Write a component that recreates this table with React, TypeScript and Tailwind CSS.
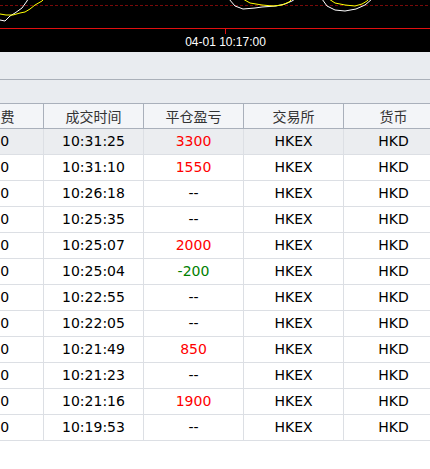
import React from "react";

type Row = { t: string; pnl: string; c: "red" | "green" | "none"; hl?: boolean };

const rows: Row[] = [
  { t: "10:31:25", pnl: "3300", c: "red", hl: true },
  { t: "10:31:10", pnl: "1550", c: "red" },
  { t: "10:26:18", pnl: "--", c: "none" },
  { t: "10:25:35", pnl: "--", c: "none" },
  { t: "10:25:07", pnl: "2000", c: "red" },
  { t: "10:25:04", pnl: "-200", c: "green" },
  { t: "10:22:55", pnl: "--", c: "none" },
  { t: "10:22:05", pnl: "--", c: "none" },
  { t: "10:21:49", pnl: "850", c: "red" },
  { t: "10:21:23", pnl: "--", c: "none" },
  { t: "10:21:16", pnl: "1900", c: "red" },
  { t: "10:19:53", pnl: "--", c: "none" },
];

const font = { fontFamily: '"DejaVu Sans", "Noto Sans CJK SC", sans-serif' };

function Chart() {
  return (
    <div className="h-[52px] bg-black flex flex-col">
      <svg width="430" height="34" viewBox="0 0 430 34" className="block">
        <line x1="0" y1="5.5" x2="430" y2="5.5" stroke="#7a0a0a" strokeWidth="1" strokeDasharray="3 2" />
        <polyline
          fill="none"
          stroke="#ffffff"
          strokeWidth="1"
          points="0,20 5,21 10,16 15,13 22,8 27,1 28,-1"
        />
        <polyline
          fill="none"
          stroke="#ffff00"
          strokeWidth="1"
          points="0,14 6,15 13,15 20,13 25,12 30,9 35,5 42,1 44,-1"
        />
        <polyline
          fill="none"
          stroke="#ffffff"
          strokeWidth="1"
          points="229,-1 235,6 243,9 255,8 262,7 276,6 285,4 292,1 295,-1"
        />
        <polyline
          fill="none"
          stroke="#ffff00"
          strokeWidth="1"
          points="243,-1 250,3 262,5 273,6 282,5 289,2 292,-1"
        />
        <polyline
          fill="none"
          stroke="#ffffff"
          strokeWidth="1"
          points="322,-1 327,6 335,10 345,11 356,9 365,5 372,-1"
        />
        <polyline
          fill="none"
          stroke="#ffff00"
          strokeWidth="1"
          points="329,-1 335,3 345,5 355,6 362,4 367,1 369,-1"
        />
        <line x1="0" y1="28.5" x2="430" y2="28.5" stroke="#e01010" strokeWidth="1.2" />
        <line x1="225.5" y1="28" x2="225.5" y2="34" stroke="#e01010" strokeWidth="1" />
      </svg>
      <div
        className="flex-1 flex items-start justify-center pl-[21px] text-white text-[12px] leading-[15px] pt-[1px]"
        style={{ fontFamily: '"Liberation Sans", Arial, sans-serif' }}
      >
        04-01 10:17:00
      </div>
    </div>
  );
}

function Cell({ children, className = "" }: { children: React.ReactNode; className?: string }) {
  return (
    <div className={`w-[100px] shrink-0 flex items-center justify-center whitespace-nowrap ${className}`}>
      {children}
    </div>
  );
}

export default function App() {
  return (
    <div className="w-[430px] h-[469px] overflow-hidden bg-white" style={font}>
      <Chart />
      <div className="h-[28px] bg-[#e9ecf0] border-b border-[#aab0b9]" />
      <div className="h-[23px] bg-[#e9ecf0]" />
      <div className="ml-[-56px] w-[500px]">
        <div className="h-[26px] flex bg-[#f3f5f8] border-t border-b border-[#a9b0bb] text-[14px] text-[#333333]">
          {["手续费", "成交时间", "平仓盈亏", "交易所", "货币"].map((h) => (
            <Cell key={h} className="border-r border-[#a9b0bb]">
              <span style={{ fontFamily: '"Noto Sans CJK SC", sans-serif' }}>{h}</span>
            </Cell>
          ))}
        </div>
        {rows.map((r, i) => (
          <div
            key={i}
            className={`h-[26px] flex border-b border-[#dcdfe4] text-[14px] text-black ${
              r.hl ? "bg-[#ebedf0]" : "bg-white"
            }`}
          >
            <Cell className="border-r border-[#dcdfe4]">0.00</Cell>
            <Cell className="border-r border-[#dcdfe4]">{r.t}</Cell>
            <Cell
              className={`border-r border-[#dcdfe4] ${
                r.c === "red" ? "text-[#ff0000]" : r.c === "green" ? "text-[#008000]" : "text-black"
              }`}
            >
              {r.pnl}
            </Cell>
            <Cell className="border-r border-[#dcdfe4]">HKEX</Cell>
            <Cell className="border-r border-[#dcdfe4]">HKD</Cell>
          </div>
        ))}
      </div>
    </div>
  );
}
